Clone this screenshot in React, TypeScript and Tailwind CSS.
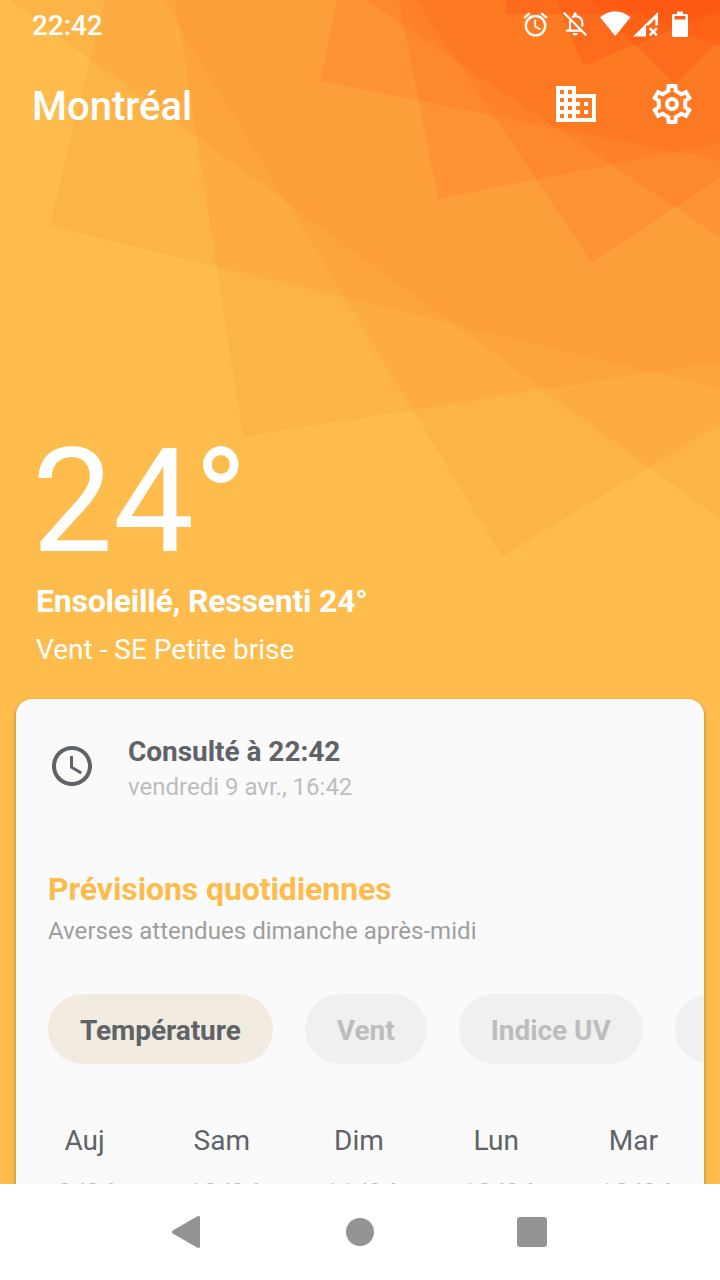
import type { ReactNode } from "react";
import { MdAccessTime, MdAlarm } from "react-icons/md";

const SUN = [
  { half: 517.7, turn: 13.65, opacity: 0.08 },
  { half: 301.1, turn: 11.3, opacity: 0.16 },
  { half: 169.2, turn: 0, opacity: 0.4 },
];

function SunBackdrop() {
  return (
    <svg className="absolute inset-0" width="720" height="1184" viewBox="0 0 720 1184" aria-hidden="true">
      <g transform="translate(675 -155)" fill="#fd5411">
        {SUN.map((ring) =>
          [0, 22.5, 45, 67.5].map((step) => (
            <rect
              key={`${ring.half}-${step}`}
              x={-ring.half}
              y={-ring.half}
              width={ring.half * 2}
              height={ring.half * 2}
              fillOpacity={ring.opacity}
              transform={`rotate(${ring.turn + step})`}
            />
          )),
        )}
      </g>
    </svg>
  );
}

function StatusBar() {
  return (
    <header className="flex h-[50px] shrink-0 items-center pr-8 pl-8">
      <span className="flex-1 pt-px text-[28px] leading-[50px] font-medium tracking-[-0.1px]">22:42</span>
      <div className="-mt-[2px] flex items-center">
        <MdAlarm className="mr-[13px] size-[29px]" />
        <svg className="mr-[13px] size-6" viewBox="0 0 24 24" fill="none" stroke="currentColor" strokeWidth="2.2" aria-hidden="true">
          <path d="M.7.7 23.300 23.300" />
          <path d="M7 8.500V18.500M3 18.700H18M9 5.300Q12 3.600 15 4.600Q19.300 6.500 19.300 11V14.500" />
          <path d="M10.400 4V2a1.700 1.700 0 0 1 3.400 0V4zM9.600 21h5a2.500 2.500 0 0 1-5 0z" fill="currentColor" stroke="none" />
        </svg>
        <svg className="h-[26px] w-[59px]" viewBox="0 0 59 26" fill="currentColor" aria-hidden="true">
          <path d="M0 6.300Q15.250-6 30.500 6.300L15.250 25Z" />
          <path d="M33 25.500 58 1V14.500H55.300V7.700L48.500 14.500H46V25.500Z" />
          <path d="M49.700 17.200 56.900 24.400M56.900 17.200 49.700 24.400" stroke="currentColor" strokeWidth="2.500" />
        </svg>
        <svg className="ml-[13px] h-[26px] w-4" viewBox="0 0 16 26" fill="currentColor" aria-hidden="true">
          <path fillRule="evenodd" d="M5 .5h6v2.500h3.500q1.500 0 1.500 1.500v20q0 1.500-1.500 1.500h-13q-1.500 0-1.500-1.500v-20Q0 3 1.500 3H5zM2.500 5v3.500h11V5z" />
        </svg>
      </div>
    </header>
  );
}

function CityIcon() {
  return (
    <svg className="size-12" viewBox="0 0 24 24" fill="currentColor" fillRule="evenodd" aria-hidden="true">
      <path d="M2 3h10v4h10v14H2zM4 5v2h2V5zM8 5v2h2V5zM4 9v2h2V9zM8 9v2h2V9zM4 13v2h2v-2zM8 13v2h2v-2zM4 17v2h2v-2zM8 17v2h2v-2zM12 9v2h2v2h-2v2h2v2h-2v2h8V9z" />
      <path d="M16 11h2v2h-2zM16 15h2v2h-2z" />
    </svg>
  );
}

const GEAR_POINTS = [0, 60, 120, 180, 240, 300]
  .flatMap((tooth) => [
    [6.8, tooth - 16],
    [9.16, tooth - 10.7],
    [9.16, tooth + 10.7],
    [6.8, tooth + 16],
  ])
  .map(([radius, degrees]) => {
    const angle = (degrees * Math.PI) / 180;
    return `${(12 + radius * Math.sin(angle)).toFixed(2)},${(12 - radius * Math.cos(angle)).toFixed(2)}`;
  })
  .join(" ");

function GearIcon() {
  return (
    <svg className="ml-12 size-12" viewBox="0 0 24 24" fill="none" stroke="currentColor" strokeWidth="2" aria-hidden="true">
      <polygon points={GEAR_POINTS} />
      <circle cx="12" cy="12" r="2.500" />
    </svg>
  );
}

function Chip({ active = false, children }: { active?: boolean; children?: ReactNode }) {
  return (
    <button
      className={`h-[70px] min-w-[122px] shrink-0 rounded-full px-8 pt-[3px] text-[28px] font-bold tracking-[-0.06px] whitespace-nowrap ${
        active ? "bg-[#f2ebe0] text-[#5f6368]" : "bg-[#f0f0f0] text-[#bdbdbd]"
      }`}
    >
      {children}
    </button>
  );
}

const DAYS = [
  { name: "Auj", date: "9/04" },
  { name: "Sam", date: "10/04" },
  { name: "Dim", date: "11/04" },
  { name: "Lun", date: "12/04" },
  { name: "Mar", date: "13/04" },
];

function ForecastCard() {
  return (
    <section className="mx-4 h-[485px] shrink-0 overflow-hidden rounded-t-[16px] bg-[#fafafa] text-[#5f6368] shadow-[0_2px_4px_rgba(0,0,0,0.3)]">
      <div className="flex h-[134px] items-center pl-8">
        <MdAccessTime className="size-12" />
        <div className="ml-8 pt-[5px]">
          <h2 className="text-[28px] leading-[38px] font-bold tracking-[-0.04px]">Consulté à 22:42</h2>
          <p className="text-2xl leading-[33px] text-[#bdbdbd]">vendredi 9 avr., 16:42</p>
        </div>
      </div>
      <h2 className="mt-[35px] pl-8 text-[32px] leading-[42px] font-bold tracking-[-0.1px] text-[#fdbc4c]">Prévisions quotidiennes</h2>
      <p className="mt-px pl-8 text-2xl leading-[40px] tracking-[0.04px] text-[#9e9e9e]">Averses attendues dimanche après-midi</p>
      <div className="mt-[43px] flex gap-8 pl-8">
        <Chip active>Température</Chip>
        <Chip>Vent</Chip>
        <Chip>Indice UV</Chip>
        <Chip />
      </div>
      <div className="mt-[57px] grid w-[686px] grid-cols-5 text-center text-[28px]">
        {DAYS.map((day) => (
          <div key={day.name} className="first:bg-[linear-gradient(#fafafa_16px,#f9f9f9_16px)]">
            <div className="leading-[40px]">{day.name}</div>
            <div className="pt-[13px] pl-1 leading-[40px] text-[#bdbdbd]">{day.date}</div>
          </div>
        ))}
      </div>
    </section>
  );
}

function NavigationBar() {
  return (
    <nav className="flex h-24 shrink-0 items-center justify-between bg-white px-[171px] text-[#939393]">
      <svg width="30" height="32" viewBox="0 0 30 32" fill="currentColor" aria-hidden="true">
        <path d="M1.700 14.500 26.500.3Q29 -.4 29 1.500V30.500Q29 32.400 26.500 31.700L1.700 17.500Q0 16 1.700 14.500Z" />
      </svg>
      <span className="ml-[2px] size-7 rounded-full bg-current" />
      <span className="mr-[2px] size-[30px] rounded-[3px] bg-current" />
    </nav>
  );
}

export default function App() {
  return (
    <div className="flex h-[1280px] w-[720px] flex-col overflow-hidden bg-[#fdbc4c] font-['Roboto',sans-serif] text-white">
      <main className="relative h-[1184px] shrink-0 overflow-hidden">
        <SunBackdrop />
        <div className="relative flex h-full flex-col">
          <StatusBar />
          <div className="flex h-[108px] shrink-0 items-center pr-6 pl-8">
            <h1 className="flex-1 pt-[5px] text-[40px] font-medium">Montréal</h1>
            <CityIcon />
            <GearIcon />
          </div>
          <div className="mt-[262px] h-[279px] shrink-0 pl-9">
            <div className="-ml-1 text-[144px] leading-[164px]">24°</div>
            <p className="-mt-1 text-[32px] leading-[42px] font-bold tracking-[-0.23px]">Ensoleillé, Ressenti 24°</p>
            <p className="mt-[7px] text-[28px] leading-[42px]">Vent - SE Petite brise</p>
          </div>
          <ForecastCard />
        </div>
      </main>
      <NavigationBar />
    </div>
  );
}
